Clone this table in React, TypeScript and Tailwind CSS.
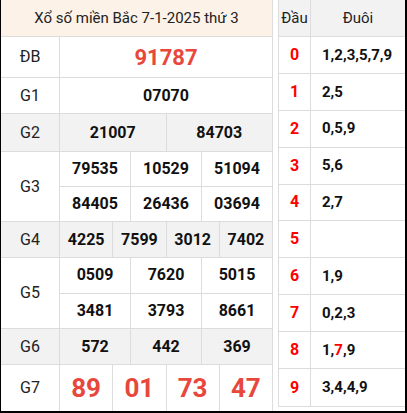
const rows: { label: string; gray?: boolean; h: string; lines: string[][]; big?: "db" | "g7" }[] = [
  { label: "ĐB", h: "h-[41px]", lines: [["91787"]], big: "db" },
  { label: "G1", h: "h-[36px]", lines: [["07070"]] },
  { label: "G2", gray: true, h: "h-[38px]", lines: [["21007", "84703"]] },
  { label: "G3", h: "h-[70px]", lines: [["79535", "10529", "51094"], ["84405", "26436", "03694"]] },
  { label: "G4", gray: true, h: "h-[36px]", lines: [["4225", "7599", "3012", "7402"]] },
  { label: "G5", h: "h-[71px]", lines: [["0509", "7620", "5015"], ["3481", "3793", "8661"]] },
  { label: "G6", gray: true, h: "h-[36px]", lines: [["572", "442", "369"]] },
  { label: "G7", h: "h-[46px]", lines: [["89", "01", "73", "47"]], big: "g7" },
];

const loto: [string, string][] = [
  ["0", "1,2,3,5,7,9"],
  ["1", "2,5"],
  ["2", "0,5,9"],
  ["3", "5,6"],
  ["4", "2,7"],
  ["5", ""],
  ["6", "1,9"],
  ["7", "0,2,3"],
  ["8", "1,7,9"],
  ["9", "3,4,4,9"],
];

// last two digits of ĐB -> highlighted in lô tô
const special = "91787".slice(-2);

function numClass(big?: "db" | "g7") {
  if (big === "db") return "text-[22px] font-bold text-[#e8473b]";
  if (big === "g7") return "text-[26px] font-bold text-[#e8473b]";
  return "text-[16px] font-bold text-[#111]";
}

function Tail({ value, head }: { value: string; head: string }) {
  const parts = value ? value.split(",") : [];
  return (
    <>
      {parts.map((p, i) => (
        <span key={i}>
          {i > 0 && ","}
          <span className={head + p === special ? "text-[#ff0000]" : ""}>{p}</span>
        </span>
      ))}
    </>
  );
}

export default function App() {
  return (
    <div className="w-[407px] h-[413px] bg-white border-l border-r-2 border-b-2 border-black flex font-['Roboto',sans-serif] text-[#222]">
      {/* kết quả */}
      <div className="w-[272px] border-r border-[#dcdcdc] flex flex-col">
        <div className="h-[37px] bg-[#fdf2e8] border-b border-[#dcdcdc] flex items-center justify-center text-[15px]">
          Xổ số miền Bắc 7-1-2025 thứ 3
        </div>
        {rows.map((r, idx) => (
          <div
            key={r.label}
            className={`${r.h} flex ${r.gray ? "bg-[#f2f2f2]" : ""} ${idx < rows.length - 1 ? "border-b border-[#dcdcdc]" : ""}`}
          >
            <div className="w-[59px] shrink-0 border-r border-[#dcdcdc] flex items-center justify-center text-[16px]">
              {r.label}
            </div>
            <div className="flex-1 flex flex-col">
              {r.lines.map((line, li) => (
                <div key={li} className={`flex-1 flex ${li < r.lines.length - 1 ? "border-b border-[#dcdcdc]" : ""}`}>
                  {line.map((n, ni) => (
                    <div
                      key={ni}
                      className={`flex-1 basis-0 flex items-center justify-center ${numClass(r.big)} ${ni < line.length - 1 ? "border-r border-[#dcdcdc]" : ""}`}
                    >
                      {n}
                    </div>
                  ))}
                </div>
              ))}
            </div>
          </div>
        ))}
      </div>

      {/* lô tô */}
      <div className="ml-[5px] w-[127px] h-[407px] border-l border-b border-[#dcdcdc] flex flex-col">
        <div className="h-[37px] bg-[#f2f2f2] border-b border-[#dcdcdc] flex text-[15px]">
          <div className="w-[32px] border-r border-[#dcdcdc] flex items-center justify-center">Đầu</div>
          <div className="flex-1 flex items-center justify-center">Đuôi</div>
        </div>
        {loto.map(([d, t], i) => (
          <div key={d} className={`h-[37px] flex ${i < loto.length - 1 ? "border-b border-[#dcdcdc]" : ""}`}>
            <div className="w-[32px] border-r border-[#dcdcdc] flex items-center justify-center text-[16px] font-bold text-[#ff0000]">
              {d}
            </div>
            <div className="flex-1 flex items-center pl-[11px] text-[15px] font-bold text-[#111]">
              <Tail value={t} head={d} />
            </div>
          </div>
        ))}
      </div>
    </div>
  );
}
